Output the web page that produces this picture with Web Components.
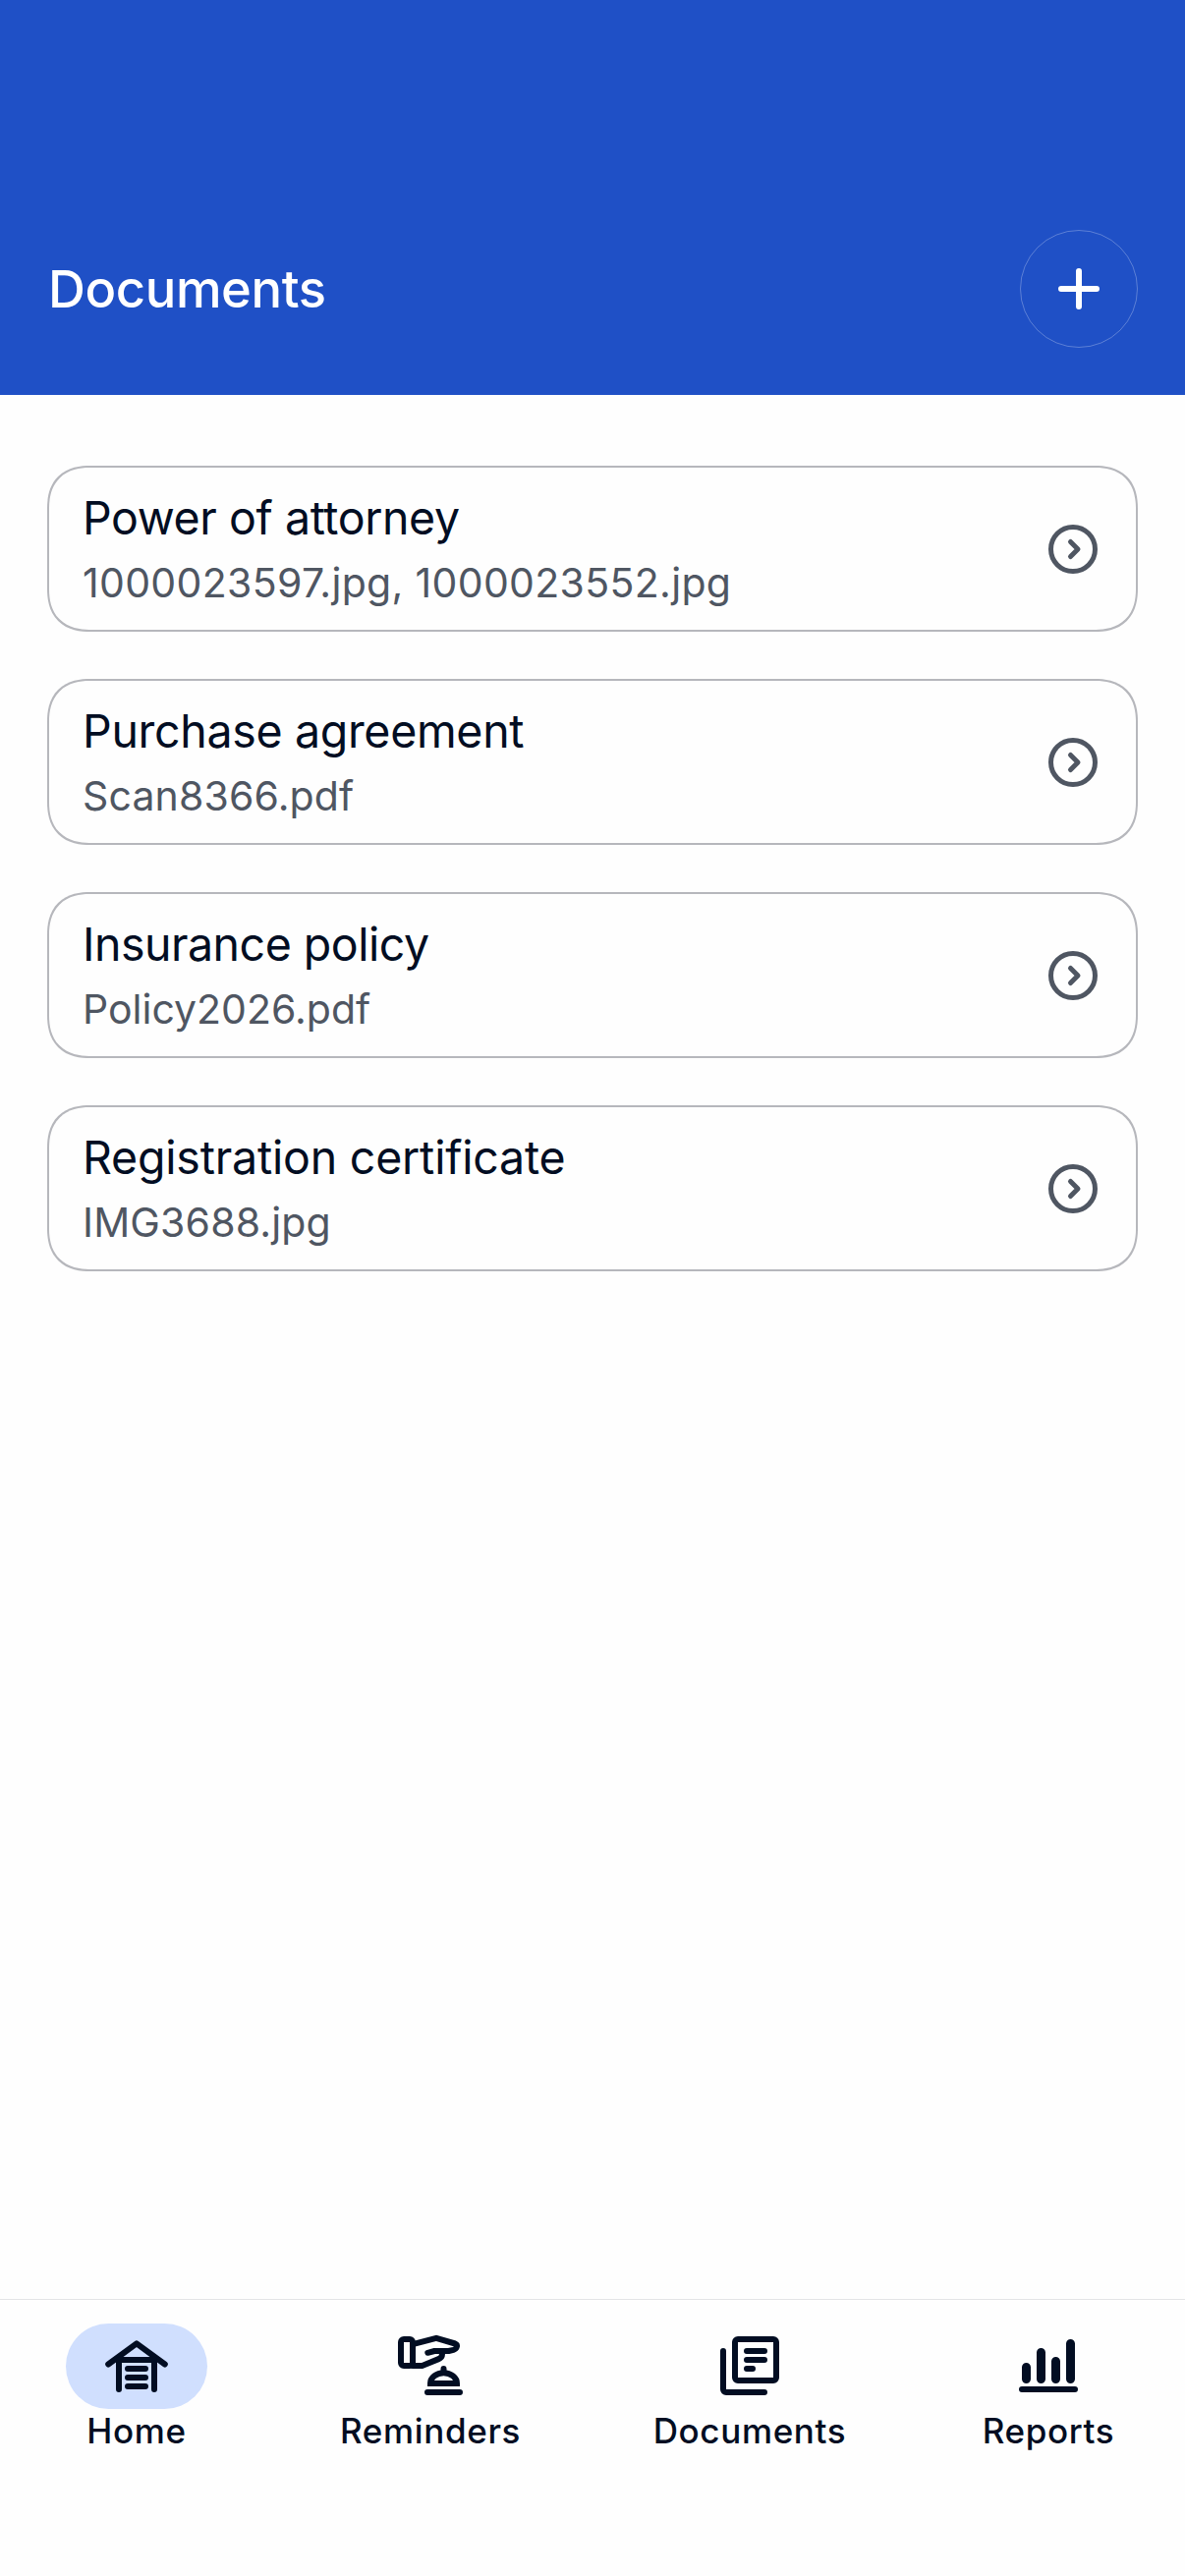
<!DOCTYPE html>
<html lang="en">
<head>
<meta charset="utf-8">
<title>Documents</title>
<style>
  html, body {
    margin: 0;
    height: 100%;
  }
  body {
    font-family: Inter, "Liberation Sans", sans-serif;
    background: #fefefe;
    color: #020d22;
    --brand: #1f50c6;
    --muted: #4f5662;
    --outline: #b6b7bc;
    --active: #d0dffe;
  }
</style>
</head>
<body>
<app-screen>
  <app-header slot="header">Documents</app-header>
  <document-card heading="Power of attorney" style="--heading-spacing: -0.4px; --files-spacing: 0.32px">1000023597.jpg, 1000023552.jpg</document-card>
  <document-card heading="Purchase agreement" style="--heading-spacing: -0.32px; --files-spacing: 0.14px">Scan8366.pdf</document-card>
  <document-card heading="Insurance policy" style="--heading-spacing: -0.5px">Policy2026.pdf</document-card>
  <document-card heading="Registration certificate" style="--heading-spacing: -0.2px; --files-spacing: 0.15px">IMG3688.jpg</document-card>
  <tab-bar slot="footer">
    <tab-item icon="garage" active>Home</tab-item>
    <tab-item icon="service" style="width: 186px">Reminders</tab-item>
    <tab-item icon="papers" style="width: 196px">Documents</tab-item>
    <tab-item icon="bars">Reports</tab-item>
  </tab-bar>
</app-screen>

<script>
const ICONS = {
  plus: `<path d="M12 6v12M6 12h12"/>`,
  chevron: `<circle cx="12" cy="12" r="9"/><path d="M11 9l3 3l-3 3"/>`,
  garage: `
    <path d="M2.4 11.5L12 4.45L21.6 11.5"/>
    <path d="M6 20V10h12v10"/>
    <path d="M9 13h6M9 16h6M9 19h6"/>`,
  service: `
    <rect x="2" y="3" width="4" height="9" rx="1"/>
    <path d="M6 4.7L14 2.6L20.4 4.5Q21.2 4.8 20.9 5.7Q20.7 6.3 19.8 6.6L18.2 7H13.4L11.1 7.6"/>
    <path d="M6 12H9.2L14.8 9.7Q16 9.2 16 8V7.4"/>
    <path stroke-linejoin="miter" d="M12 18a4.5 3.6 0 0 1 9 0z"/>
    <path d="M16.5 13v1M11 21h11"/>`,
  papers: `
    <rect x="7" y="3" width="14" height="14" rx="1"/>
    <path d="M3 7v13a1 1 0 0 0 1 1h13"/>
    <path d="M11 7h6M11 10h6M11 13h2"/>`,
  bars: `
    <path d="M3 20h18"/>
    <path stroke-width="3" d="M4.5 12.5v4M9.5 7.5v9M14.5 10.5v6M19.5 4.5v12"/>`,
};

class AppIcon extends HTMLElement {
  connectedCallback() {
    if (!this.shadowRoot) this.attachShadow({ mode: "open" });
    this.shadowRoot.innerHTML = `
      <style>
        :host {
          display: block;
          flex: none;
          width: 72px;
          height: 72px;
        }
        svg {
          display: block;
          width: 100%;
          height: 100%;
        }
      </style>
      <svg viewBox="0 0 24 24" fill="none" stroke="currentColor" stroke-width="2"
           stroke-linecap="round" stroke-linejoin="round" aria-hidden="true">
        ${ICONS[this.getAttribute("name")] || ""}
      </svg>
    `;
  }
}

class AppScreen extends HTMLElement {
  constructor() {
    super();
    this.attachShadow({ mode: "open" }).innerHTML = `
      <style>
        :host {
          display: flex;
          flex-direction: column;
          height: 100%;
        }
        main {
          flex: 1;
          display: flex;
          flex-direction: column;
          gap: 48px;
          padding: 72px 48px;
        }
      </style>
      <slot name="header"></slot>
      <main><slot></slot></main>
      <slot name="footer"></slot>
    `;
  }
}

class AppHeader extends HTMLElement {
  constructor() {
    super();
    this.attachShadow({ mode: "open" }).innerHTML = `
      <style>
        :host {
          display: flex;
          align-items: center;
          justify-content: space-between;
          box-sizing: border-box;
          height: 402px;
          padding: 186px 48px 0 49px;
          background: var(--brand);
          color: #fff;
        }
        h1 {
          margin: 0;
          font-size: 52.5px;
          font-weight: 500;
          line-height: 64px;
          letter-spacing: -0.4px;
        }
        button {
          display: grid;
          place-items: center;
          box-sizing: border-box;
          width: 120px;
          height: 120px;
          padding: 0;
          border: 1px solid rgba(255, 255, 255, 0.27);
          border-radius: 50%;
          background: none;
          color: inherit;
        }
      </style>
      <h1><slot></slot></h1>
      <button type="button" aria-label="Add document"><app-icon name="plus"></app-icon></button>
    `;
  }
}

class DocumentCard extends HTMLElement {
  connectedCallback() {
    if (!this.shadowRoot) this.attachShadow({ mode: "open" });
    this.shadowRoot.innerHTML = `
      <style>
        :host {
          display: flex;
          align-items: center;
          justify-content: space-between;
          box-sizing: border-box;
          height: 169px;
          padding: 0 34px;
          border: 2px solid var(--outline);
          border-radius: 44px;
          corner-shape: superellipse(1.25);
        }
        h2, p {
          margin: 0;
          font-weight: 400;
          white-space: nowrap;
        }
        h2 {
          font-size: 46.5px;
          line-height: 72px;
          letter-spacing: var(--heading-spacing, 0);
        }
        p {
          padding-bottom: 4px;
          font-size: 41px;
          line-height: 60px;
          letter-spacing: var(--files-spacing, 0);
          color: var(--muted);
        }
        app-icon {
          width: 60px;
          height: 60px;
          color: var(--muted);
        }
      </style>
      <div>
        <h2></h2>
        <p><slot></slot></p>
      </div>
      <app-icon name="chevron"></app-icon>
    `;
    this.shadowRoot.querySelector("h2").textContent = this.getAttribute("heading");
  }
}

class TabBar extends HTMLElement {
  constructor() {
    super();
    this.attachShadow({ mode: "open" }).innerHTML = `
      <style>
        :host {
          display: flex;
          gap: 134px;
          box-sizing: border-box;
          height: 282px;
          padding: 24px 67px 0;
          border-top: 1px solid #e3e4e6;
        }
      </style>
      <slot></slot>
    `;
  }
}

class TabItem extends HTMLElement {
  connectedCallback() {
    if (!this.shadowRoot) this.attachShadow({ mode: "open" });
    this.shadowRoot.innerHTML = `
      <style>
        :host {
          display: flex;
          flex: none;
          flex-direction: column;
          align-items: center;
          width: 144px;
        }
        .pill {
          display: flex;
          justify-content: center;
          box-sizing: border-box;
          width: 144px;
          height: 87px;
          padding-top: 7px;
          border-radius: 44px;
        }
        :host([active]) .pill {
          background: var(--active);
        }
        .label {
          font-size: 35px;
          font-weight: 500;
          line-height: 44px;
          letter-spacing: 0.65px;
          white-space: nowrap;
        }
      </style>
      <div class="pill"><app-icon name="${this.getAttribute("icon")}"></app-icon></div>
      <span class="label"><slot></slot></span>
    `;
  }
}

customElements.define("app-icon", AppIcon);
customElements.define("app-screen", AppScreen);
customElements.define("app-header", AppHeader);
customElements.define("document-card", DocumentCard);
customElements.define("tab-bar", TabBar);
customElements.define("tab-item", TabItem);
</script>
</body>
</html>
